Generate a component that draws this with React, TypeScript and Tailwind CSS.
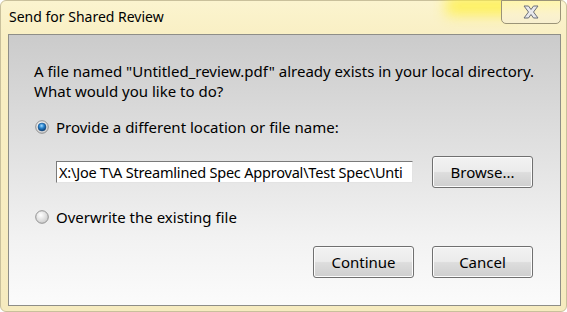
import React from "react";

const font = { fontFamily: '"Noto Sans", "Open Sans", sans-serif' };

function Radio({ checked }: { checked: boolean }) {
  return (
    <svg width="14" height="14" viewBox="0 0 14 14" className="shrink-0">
      <defs>
        <radialGradient id={checked ? "rg1" : "rg0"} cx="0.4" cy="0.35" r="0.7">
          <stop offset="0" stopColor="#ffffff" />
          <stop offset="1" stopColor="#c9c9c9" />
        </radialGradient>
        <radialGradient id="dot" cx="0.45" cy="0.35" r="0.65">
          <stop offset="0" stopColor="#a8dcff" />
          <stop offset="0.45" stopColor="#2a86cf" />
          <stop offset="1" stopColor="#0a3a6e" />
        </radialGradient>
      </defs>
      <circle cx="7" cy="7" r="6.3" fill={`url(#${checked ? "rg1" : "rg0"})`} stroke="#8a8a8a" strokeWidth="0.9" />
      {checked && <circle cx="7" cy="7" r="4" fill="url(#dot)" stroke="#1b4f86" strokeWidth="0.5" />}
    </svg>
  );
}

function Btn({ label }: { label: string }) {
  return (
    <div className="w-[101px] h-[32px] rounded-[3px] border border-[#707070] bg-[linear-gradient(#f2f2f2_0%,#ebebeb_48%,#dddddd_52%,#cfcfcf_100%)] shadow-[inset_0_0_0_1px_#fcfcfc] flex items-center justify-center text-[15px] text-black">
      {label}
    </div>
  );
}

export default function App() {
  return (
    <div className="w-[567px] h-[312px] overflow-hidden bg-white" style={font}>
      <div className="relative w-[567px] h-[312px] rounded-[6px] border border-[#c9c09b] bg-[linear-gradient(180deg,#fbf4cf_0%,#f9efc3_12%,#f6ebbf_100%)]">
        <div className="absolute left-[445px] top-[-4px] w-[70px] h-[18px] bg-[#fff03a] blur-[7px] opacity-80" />
        <div className="relative h-[33px] flex items-start">
          <div className="pl-[8px] pt-[6px] text-[14px] leading-[20px] text-black">Send for Shared Review</div>
          <div className="absolute left-[500px] top-[-1px] w-[60px] h-[24px] rounded-b-[5px] border border-[#9b9478] bg-[linear-gradient(#fff6ad_0%,#fbf2cc_60%,#f7efd0_100%)] flex items-center justify-center">
            <svg width="20" height="14" viewBox="0 0 20 14">
              <path d="M3 1 H7.5 L10 4.5 L12.5 1 H17 L12.5 7 L17 13 H12.5 L10 9.5 L7.5 13 H3 L7.5 7 Z" fill="#e8e8ec" stroke="#6b6f78" strokeWidth="1" strokeLinejoin="round" />
            </svg>
          </div>
        </div>
        <div className="ml-[7px] w-[553px] h-[272px] border border-[#8e8e88] bg-[linear-gradient(180deg,#cbcbcb_0%,#e2e2e2_45%,#f2f2f2_75%,#fbfbfb_100%)] flex flex-col text-[15px] text-black">
          <div className="pl-[25px] pt-[26px] leading-[20px]">
            <div>A file named "Untitled_review.pdf" already exists in your local directory.</div>
            <div>What would you like to do?</div>
          </div>
          <div className="mt-[16px] h-[20px] pl-[26px] flex items-center gap-[7px]">
            <Radio checked />
            <span>Provide a different location or file name:</span>
          </div>
          <div className="mt-[19px] pl-[47px] flex items-center gap-[19px]">
            <div className="w-[357px] h-[22px] border border-t-[#7a7a7a] border-l-[#7a7a7a] border-r-[#e3e3e3] border-b-[#e3e3e3] bg-white flex items-center pl-[2px] overflow-hidden whitespace-nowrap leading-[20px] text-[14.5px] tracking-[-0.2px]">
              X:\Joe T\A Streamlined Spec Approval\Test Spec\Unti
            </div>
            <Btn label="Browse..." />
          </div>
          <div className="mt-[19px] h-[20px] pl-[26px] flex items-center gap-[7px]">
            <Radio checked={false} />
            <span>Overwrite the existing file</span>
          </div>
          <div className="mt-[19px] pr-[27px] flex justify-end gap-[18px]">
            <Btn label="Continue" />
            <Btn label="Cancel" />
          </div>
        </div>
      </div>
    </div>
  );
}
